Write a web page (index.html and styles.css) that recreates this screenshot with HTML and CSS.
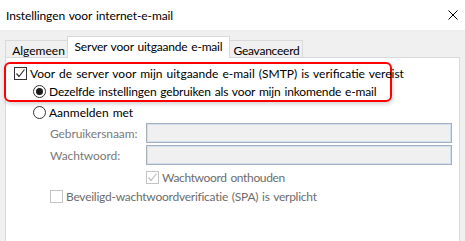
FILE: index.html
```html
<!DOCTYPE html>
<html lang="nl">
<head>
    <meta charset="UTF-8">
    <title>Instellingen voor internet-e-mail</title>
    <link rel="stylesheet" href="styles.css">
</head>
<body>
    <div class="window">
        <div class="titlebar">
            <span class="title">Instellingen voor internet-e-mail</span>
            <svg class="close" width="10" height="10" viewBox="0 0 10 10">
                <path d="M0.5 0.5 L9.5 9.5 M9.5 0.5 L0.5 9.5" stroke="#000" stroke-width="1" fill="none"/>
            </svg>
        </div>
        <div class="content">
            <div class="tabs">
                <div class="tab first">Algemeen</div>
                <div class="tab active">Server voor uitgaande e-mail</div>
                <div class="tab last">Geavanceerd</div>
            </div>
            <div class="panel">
                <div class="highlight">
                    <div class="row">
                        <span class="check">
                            <svg width="11" height="11" viewBox="0 0 11 11"><path d="M1.5 5.5 L4 8.5 L9.5 1.5" stroke="#333" stroke-width="1.2" fill="none"/></svg>
                        </span>
                        <span>Voor de server voor mijn uitgaande e-mail (SMTP) is verificatie vereist</span>
                    </div>
                    <div class="row indent same">
                        <span class="radio on"></span>
                        <span>Dezelfde instellingen gebruiken als voor mijn inkomende e-mail</span>
                    </div>
                </div>
                <div class="row indent login">
                    <span class="radio"></span>
                    <span>Aanmelden met</span>
                </div>
                <div class="field">
                    <span class="field-label">Gebruikersnaam:</span>
                    <span class="input"></span>
                </div>
                <div class="field">
                    <span class="field-label">Wachtwoord:</span>
                    <span class="input"></span>
                </div>
                <div class="row disabled remember">
                    <span class="check">
                        <svg width="11" height="11" viewBox="0 0 11 11"><path d="M1.5 5.5 L4 8.5 L9.5 1.5" stroke="#bdbdbd" stroke-width="1.2" fill="none"/></svg>
                    </span>
                    <span>Wachtwoord onthouden</span>
                </div>
                <div class="row disabled spa">
                    <span class="check"></span>
                    <span>Beveiligd-wachtwoordverificatie (SPA) is verplicht</span>
                </div>
            </div>
        </div>
    </div>
</body>
</html>
```

FILE: styles.css
```css
body {
    margin: 0;
    font-family: 'Segoe UI', Lato, sans-serif;
    font-size: 12px;
    word-spacing: 1px;
    color: #000;
    background-color: #f0f0f0;
    white-space: nowrap;
}

.window {
    width: 465px;
    height: 241px;
    overflow: hidden;
}

.titlebar {
    height: 30px;
    background-color: #fff;
    display: flex;
    align-items: center;
    justify-content: space-between;
    padding: 0 7px 0 6px;
    box-sizing: border-box;
}

.title {
    letter-spacing: -0.1px;
}

.close {
    margin-top: -1px;
}

.content {
    padding: 6px 5px 0 5px;
}

.tabs {
    display: flex;
    align-items: flex-end;
    height: 21px;
    position: relative;
    z-index: 1;
}

.tab {
    height: 17px;
    box-sizing: border-box;
    border: 1px solid #d9d9d9;
    border-bottom: none;
    background-color: #f0f0f0;
    display: flex;
    align-items: center;
    justify-content: center;
    padding-top: 2px;
}

.tab.first {
    width: 64px;
    padding-left: 3px;
}

.tab.active {
    height: 22px;
    width: 163px;
    margin: 0 -2px -1px -2px;
    background-color: #fff;
    padding-top: 0;
    padding-bottom: 2px;
    letter-spacing: -0.2px;
    position: relative;
    z-index: 2;
}

.tab.last {
    width: 75px;
    padding-left: 2px;
    letter-spacing: -0.25px;
}

.panel {
    width: 455px;
    height: 200px;
    box-sizing: border-box;
    background-color: #fff;
    border: 1px solid #d9d9d9;
}

.highlight {
    width: 388px;
    height: 40px;
    box-sizing: border-box;
    margin: 4px 0 0 -2px;
    border: 2px solid #f00;
    border-radius: 6px;
    box-shadow: 1px 2px 4px rgba(0, 0, 0, 0.18);
}

.row {
    height: 18px;
    display: flex;
    align-items: center;
    padding-left: 8px;
}

.row.indent {
    padding-left: 27px;
}

.row.same {
    letter-spacing: -0.16px;
}

.login {
    margin-top: 1px;
}

.check {
    width: 13px;
    height: 13px;
    box-sizing: border-box;
    border: 1px solid #333;
    background-color: #fff;
    margin-right: 3px;
    display: flex;
    align-items: center;
    justify-content: center;
    flex-shrink: 0;
}

.radio {
    width: 13px;
    height: 13px;
    box-sizing: border-box;
    border: 1px solid #333;
    border-radius: 50%;
    margin-right: 3px;
    display: flex;
    align-items: center;
    justify-content: center;
    flex-shrink: 0;
}

.radio.on::after {
    content: '';
    width: 7px;
    height: 7px;
    border-radius: 50%;
    background-color: #1a1a1a;
}

.field {
    height: 20px;
    margin-top: 2px;
    display: flex;
    align-items: center;
    padding-left: 44px;
}

.field-label {
    width: 96px;
    color: #7a7a7a;
    letter-spacing: -0.1px;
}

.input {
    width: 306px;
    height: 20px;
    box-sizing: border-box;
    border: 1px solid #a9b0bb;
    box-shadow: inset 0 0 0 1px #cddff3;
    background-color: #f0f0f0;
}

.disabled {
    color: #6d6d6d;
}

.disabled .check {
    border-color: #c4c4c4;
}

.remember {
    margin-top: 3px;
    padding-left: 140px;
    letter-spacing: -0.35px;
}

.spa {
    margin-top: 1px;
    padding-left: 44px;
    letter-spacing: -0.25px;
}
```
